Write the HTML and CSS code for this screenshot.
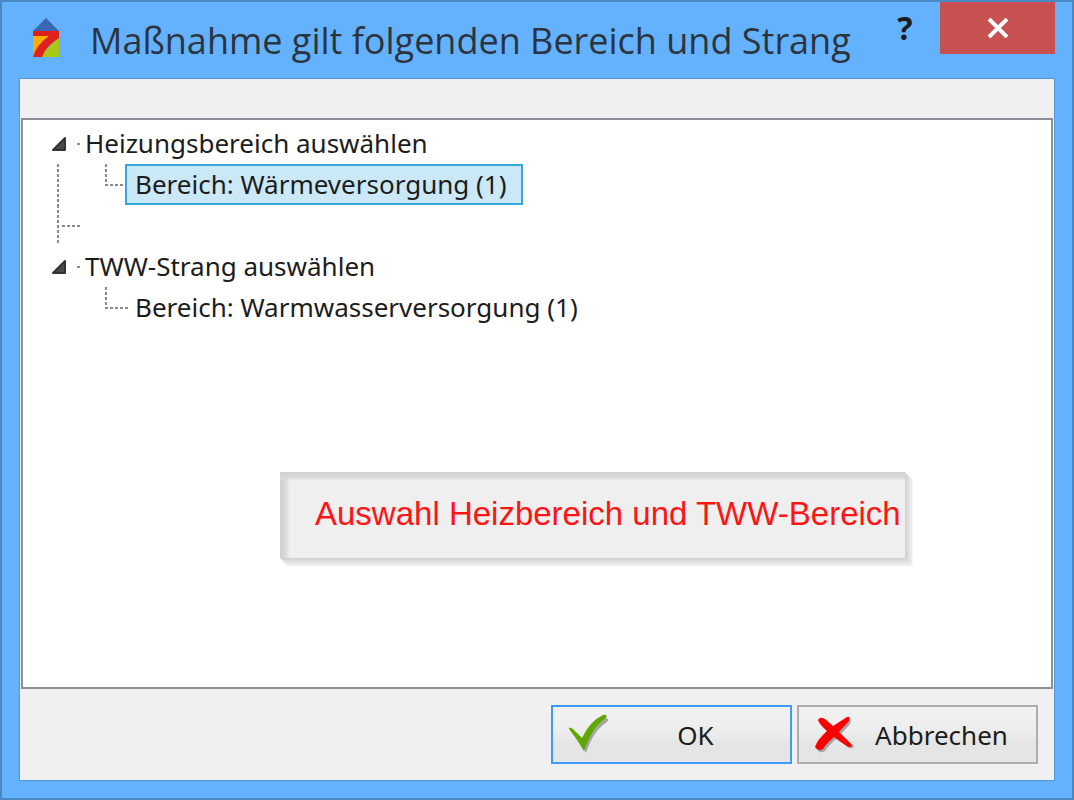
FILE: index.html
```html
<!DOCTYPE html>
<html lang="de">
<head>
  <meta charset="UTF-8">
  <meta name="viewport" content="width=device-width, initial-scale=1.0">
  <title>Maßnahme gilt folgenden Bereich und Strang</title>
  <link rel="stylesheet" href="styles.css">
</head>
<body>
  <div class="window">
    <header class="titlebar">
      <svg class="logo" width="26" height="40" viewBox="0 0 26 40" aria-hidden="true">
        <path fill="#3a68b4" d="M13 0L26 13H0z"/>
        <path fill="#f9b000" d="M0 13h20L2 39H0z"/>
        <path fill="#a9c813" d="M26 19v20H6z"/>
        <path fill="#e0201b" d="M0 13h26v7Q13 28 9 39H0Q3 27 16 18H0z"/>
      </svg>
      <h1>Maßnahme gilt folgenden Bereich und Strang</h1>
      <button class="help" type="button" aria-label="Hilfe">?</button>
      <button class="close" type="button" aria-label="Schließen">
        <svg width="22" height="20" viewBox="0 0 22 20"><path d="M2 1L20 19M20 1L2 19" stroke="#fff" stroke-width="4"/></svg>
      </button>
    </header>

    <main class="client">
      <div class="panel">
        <ul class="tree">
          <li>
            <div class="row">
              <svg class="branch" width="62" height="41" viewBox="0 0 62 41">
                <path class="arrow" d="M42 27V15L30 27z"/>
                <path class="dots" d="M54 21h3"/>
              </svg>
              <span class="label">Heizungsbereich auswählen</span>
            </div>
            <ul>
              <li class="row">
                <svg class="branch" width="102" height="41" viewBox="0 0 102 41">
                  <path class="dots" d="M35 0v41M83 0v20M82 21h20"/>
                </svg>
                <span class="label leaf selected">Bereich: Wärmeversorgung (1)</span>
              </li>
            </ul>
          </li>
          <li class="row">
            <svg class="branch" width="62" height="41" viewBox="0 0 62 41">
              <path class="dots" d="M35 0v38M39 21h19"/>
            </svg>
          </li>
          <li>
            <div class="row">
              <svg class="branch" width="62" height="41" viewBox="0 0 62 41">
                <path class="arrow" d="M42 27V15L30 27z"/>
                <path class="dots" d="M54 21h3"/>
              </svg>
              <span class="label">TWW-Strang auswählen</span>
            </div>
            <ul>
              <li class="row">
                <svg class="branch" width="102" height="41" viewBox="0 0 102 41">
                  <path class="dots" d="M83 0v20M82 21h24"/>
                </svg>
                <span class="label leaf">Bereich: Warmwasserversorgung (1)</span>
              </li>
            </ul>
          </li>
        </ul>
        <p class="note">Auswahl Heizbereich und TWW-Bereich</p>
      </div>

      <footer class="buttons">
        <button class="btn default" type="button">
          <svg width="42" height="42" viewBox="0 0 42 42" aria-hidden="true">
            <path class="shade" d="M4 16Q9 18 16 27Q25 9 38 4Q42 5 39 8Q25 17 18 39Q12 29 4 16z"/>
            <path fill="#5fa800" d="M1 15Q1 12 5 15L14 24Q22 7 35 1Q40 0 38 4Q24 13 16 37Q9 25 1 15z"/>
          </svg>
          <span>OK</span>
        </button>
        <button class="btn" type="button">
          <svg width="42" height="42" viewBox="0 0 42 42" aria-hidden="true">
            <path class="shade" d="M6 7Q9 3 14 8L21 14L34 5Q38 6 36 10L27 20L40 32Q39 35 36 34L22 25Q14 32 11 37Q5 40 3 35Q6 27 15 19Q8 12 6 7z"/>
            <path fill="#f00" d="M4 6Q6 2 11 5L19 12L33 3Q37 2 35 7L25 18L38 31Q37 34 34 33L20 23Q12 30 9 35Q4 38 1 33Q3 26 13 17Q5 10 4 6z"/>
          </svg>
          <span>Abbrechen</span>
        </button>
      </footer>
    </main>
  </div>
</body>
</html>
```
FILE: styles.css
```css
* {
  margin: 0;
  padding: 0;
  box-sizing: border-box;
}

body {
  font-family: "Noto Sans", "Open Sans", sans-serif;
  color: #1c1c1c;
}

button {
  font: inherit;
  color: inherit;
  border: none;
  cursor: pointer;
}

.window {
  display: flex;
  flex-direction: column;
  min-height: 100vh;
  padding: 0 17px 17px;
  background: #64b2fd;
  border: 2px solid #4a89c3;
}

/* title bar */
.titlebar {
  display: flex;
  align-items: flex-start;
  height: 76px;
}

.logo {
  margin: 16px 31px 0 14px;
}

.titlebar h1 {
  flex: 1;
  font: 400 36px/78px "Open Sans", sans-serif;
  white-space: nowrap;
  color: #2b3440;
}

.help {
  width: 56px;
  padding-right: 14px;
  background: none;
  font: 700 32px/52px "Noto Sans", sans-serif;
}

.close {
  display: flex;
  align-items: center;
  justify-content: center;
  width: 115px;
  height: 52px;
  background: #c75050;
}

/* dialog body */
.client {
  flex: 1;
  display: flex;
  flex-direction: column;
  padding-top: 39px;
  background: #f0f0f0;
  border: 1px solid #5696d2;
}

.panel {
  position: relative;
  flex: 1;
  margin: 0 1px;
  padding-top: 3px;
  background: #fff;
  border: 2px solid #8c8e98;
}

.tree,
.tree ul {
  list-style: none;
}

.row {
  display: flex;
  height: 41px;
}

.branch {
  overflow: visible;
}

.dots {
  fill: none;
  stroke: #8a8a8a;
  stroke-width: 2;
  stroke-dasharray: 3 2;
}

.arrow {
  fill: #4a4a4a;
  stroke: #333;
  stroke-width: 2;
  stroke-linejoin: round;
}

.label {
  font-size: 26px;
  line-height: 41px;
  white-space: nowrap;
}

.leaf {
  padding: 0 16px 0 10px;
}

.selected {
  background: #cbe8f6;
  box-shadow: inset 0 0 0 2px #35a8de;
}

/* bevelled callout over the tree */
.note {
  position: absolute;
  top: 352px;
  left: 257px;
  padding: 24px 4px 26px 35px;
  background:
    linear-gradient(#d0d0d0, #dcdcdc 6px, transparent 9px),
    linear-gradient(to right, #d0d0d0, #dcdcdc 6px, transparent 10px),
    #efefef;
  font: 33px/36px "Liberation Sans", Arial, sans-serif;
  white-space: nowrap;
  color: #ff1414;
}

.note::before,
.note::after {
  content: "";
  position: absolute;
}

.note::before {
  top: 100%;
  left: 0;
  right: -8px;
  height: 8px;
  background: linear-gradient(#cfcfcf, #f4f4f4);
  clip-path: polygon(0 0, calc(100% - 8px) 0, 100% 100%, 8px 100%);
}

.note::after {
  top: 0;
  bottom: -8px;
  left: 100%;
  width: 8px;
  background: linear-gradient(to right, #cfcfcf, #f4f4f4);
  clip-path: polygon(0 0, 100% 8px, 100% 100%, 0 calc(100% - 8px));
}

/* buttons */
.buttons {
  display: flex;
  justify-content: flex-end;
  gap: 5px;
  padding: 16px;
}

.btn {
  display: flex;
  align-items: center;
  width: 241px;
  height: 59px;
  padding: 0 15px;
  background: linear-gradient(#f1f1f1 15%, #ebebeb 50%, #e5e5e5 65%);
  border: 2px solid #adadad;
  font-size: 26px;
}

.btn.default {
  border-color: #3c9bfd;
}

.btn span {
  flex: 1;
  padding-left: 6px;
  text-align: center;
}

.shade {
  fill: #777;
  opacity: 0.6;
}
```
